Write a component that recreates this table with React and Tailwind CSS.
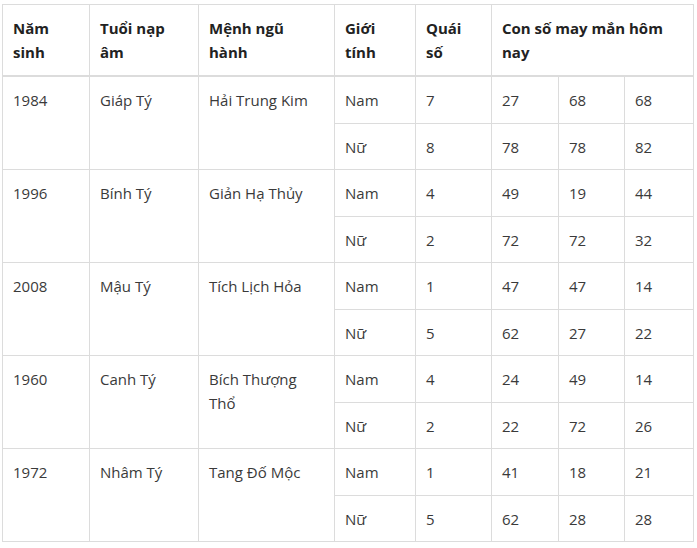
const rows = [
  { nam: "1984", tuoi: "Giáp Tý", menh: "Hải Trung Kim", sub: [["Nam", "7", "27", "68", "68"], ["Nữ", "8", "78", "78", "82"]] },
  { nam: "1996", tuoi: "Bính Tý", menh: "Giản Hạ Thủy", sub: [["Nam", "4", "49", "19", "44"], ["Nữ", "2", "72", "72", "32"]] },
  { nam: "2008", tuoi: "Mậu Tý", menh: "Tích Lịch Hỏa", sub: [["Nam", "1", "47", "47", "14"], ["Nữ", "5", "62", "27", "22"]] },
  { nam: "1960", tuoi: "Canh Tý", menh: "Bích Thượng Thổ", sub: [["Nam", "4", "24", "49", "14"], ["Nữ", "2", "22", "72", "26"]] },
  { nam: "1972", tuoi: "Nhâm Tý", menh: "Tang Đố Mộc", sub: [["Nam", "1", "41", "18", "21"], ["Nữ", "5", "62", "28", "28"]] },
];

const td = "border border-[#dcdcdc] align-top px-[10px] pt-[11px] pb-[10.5px] leading-[24px]";
const th = "border border-[#dcdcdc] border-b-2 align-top text-left font-bold px-[10px] pt-[11px] pb-[11px] leading-[24px]";

export default function App() {
  return (
    <div className="bg-white w-[697px] h-[548px] pt-[4px] pl-[2px]" style={{ fontFamily: '"Open Sans", sans-serif' }}>
      <table className="border-collapse table-fixed w-[691px] text-[15px] text-[#3a3a3a]">
        <colgroup>
          <col className="w-[87px]" />
          <col className="w-[109px]" />
          <col className="w-[136px]" />
          <col className="w-[81px]" />
          <col className="w-[76px]" />
          <col className="w-[67px]" />
          <col className="w-[66px]" />
          <col className="w-[69px]" />
        </colgroup>
        <thead>
          <tr className="text-[#222]">
            <th className={th}>Năm<br />sinh</th>
            <th className={th}>Tuổi nạp<br />âm</th>
            <th className={th}>Mệnh ngũ<br />hành</th>
            <th className={th}>Giới<br />tính</th>
            <th className={th}>Quái<br />số</th>
            <th className={th} colSpan={3}>Con số may mắn hôm<br />nay</th>
          </tr>
        </thead>
        <tbody>
          {rows.map((r) =>
            r.sub.map((s, i) => (
              <tr key={r.nam + i}>
                {i === 0 && (
                  <>
                    <td rowSpan={2} className={td}>{r.nam}</td>
                    <td rowSpan={2} className={td}>{r.tuoi}</td>
                    <td rowSpan={2} className={td}>{r.menh}</td>
                  </>
                )}
                {s.map((v, j) => (
                  <td key={j} className={td}>{v}</td>
                ))}
              </tr>
            ))
          )}
        </tbody>
      </table>
    </div>
  );
}
